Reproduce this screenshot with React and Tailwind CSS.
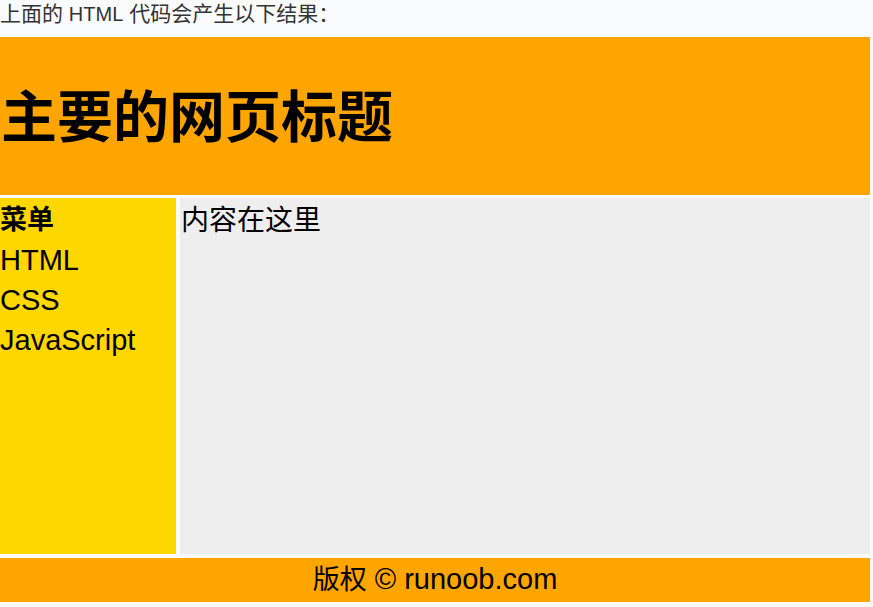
export default function App() {
  const cjk = { fontFamily: '"Liberation Sans", "Noto Sans CJK SC", sans-serif' };
  return (
    <div className="w-[873px] h-[607px] bg-[#fafbfd] text-black overflow-hidden" style={cjk}>
      <div className="h-[37px] text-[21px] leading-[28px] text-[#333]">
        上面的 <span className="text-[20px]">HTML</span> 代码会产生以下结果：
      </div>
      <div className="w-[870px] flex flex-col gap-[3px]">
        <div className="h-[158px] bg-[#ffa500] flex items-center pl-[1px] pt-[3px]">
          <h1 className="text-[56px] font-bold leading-none">主要的网页标题</h1>
        </div>
        <div className="flex gap-[4px] h-[356px]">
          <div className="w-[176px] bg-[#ffd700] text-[29px] leading-[40px] pt-[2px]">
            <div className="font-bold text-[27px]">菜单</div>
            <div>HTML</div>
            <div>CSS</div>
            <div>JavaScript</div>
          </div>
          <div className="flex-1 bg-[#eeeeee] text-[28px] leading-[40px] pl-[1px] pt-[3px]">内容在这里</div>
        </div>
        <div className="h-[44px] mt-[1px] bg-[#ffa500] flex items-center justify-center text-[29px]">
          <span className="text-[27px]">版权</span>&nbsp;© runoob.com
        </div>
      </div>
    </div>
  );
}
